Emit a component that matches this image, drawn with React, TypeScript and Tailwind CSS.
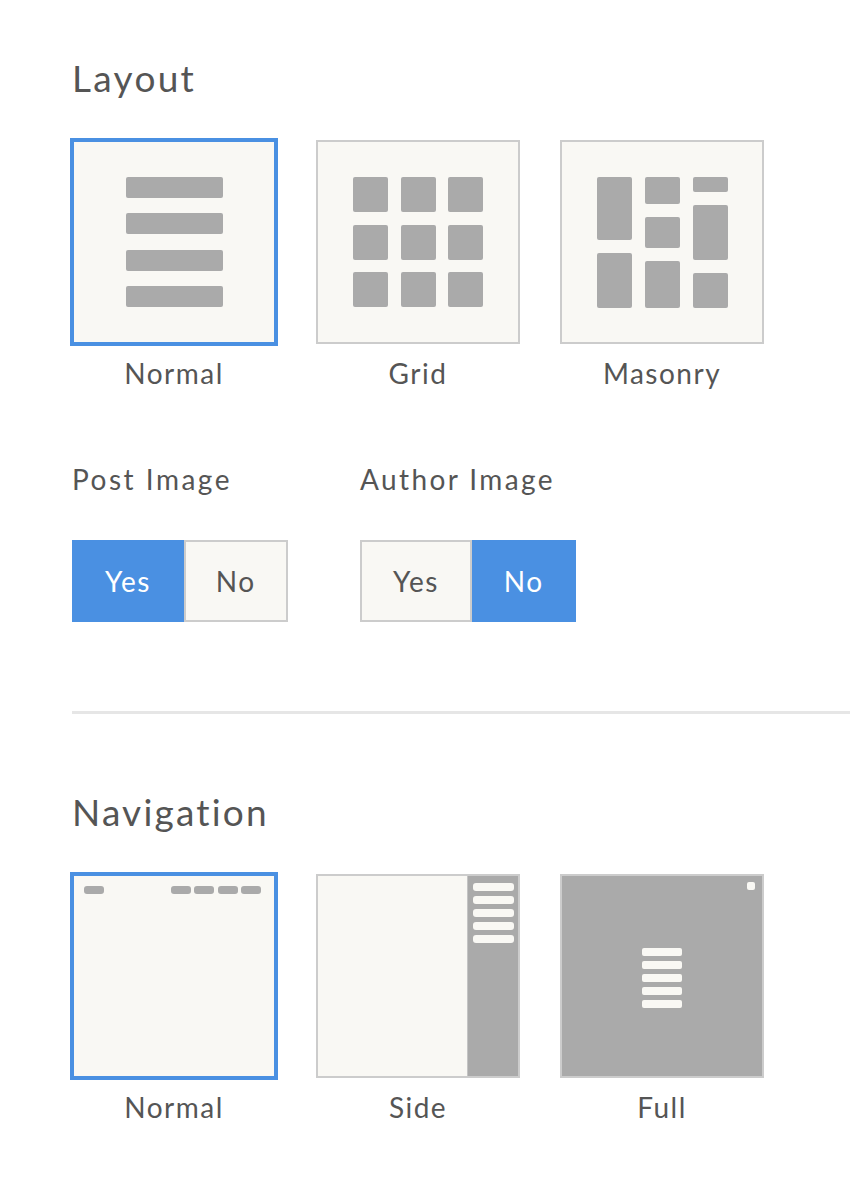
import React from "react";

const font = { fontFamily: "Lato, 'Open Sans', sans-serif" };

function Bar({ className }: { className: string }) {
  return <div className={`rounded-[2px] bg-[#aaaaaa] ${className}`} />;
}

function Card({
  selected,
  label,
  className = "",
  children,
}: {
  selected?: boolean;
  label: string;
  className?: string;
  children: React.ReactNode;
}) {
  return (
    <div className="flex w-[204px] flex-col items-center">
      <div
        className={`h-[204px] w-[204px] border-2 ${
          selected ? "border-[#4a90e2] ring-2 ring-[#4a90e2]" : "border-[#cccccc]"
        } ${className}`}
      >
        {children}
      </div>
      <div className="mt-[12px] text-[28px] leading-[34px] tracking-[1.5px]">{label}</div>
    </div>
  );
}

function Toggle({ value }: { value: "yes" | "no" }) {
  const on = "border-[#4a90e2] bg-[#4a90e2] text-white";
  const off = "border-[#cccccc] bg-[#f9f8f4] text-[#555555]";
  return (
    <div className="flex h-[82px] text-[28px] tracking-[1.5px]">
      <div className={`flex items-center border-2 px-[31px] ${value === "yes" ? on : off}`}>Yes</div>
      <div className={`flex items-center border-2 px-[30px] ${value === "no" ? on : off}`}>No</div>
    </div>
  );
}

export default function App() {
  return (
    <div className="h-[1190px] w-[850px] bg-white pl-[72px] pt-[56px] text-[#555555]" style={font}>
      <h2 className="text-[37px] leading-[44px] tracking-[2.3px]">Layout</h2>

      <div className="mt-[40px] flex gap-[40px]">
        <Card selected label="Normal" className="flex flex-col items-center justify-center gap-[15.5px] bg-[#f9f8f4]">
          <Bar className="h-[21px] w-[97px]" />
          <Bar className="h-[21px] w-[97px]" />
          <Bar className="h-[21px] w-[97px]" />
          <Bar className="h-[21px] w-[97px]" />
        </Card>
        <Card label="Grid" className="flex items-center justify-center bg-[#f9f8f4]">
          <div className="grid grid-cols-3 gap-[12.5px]">
            {Array.from({ length: 9 }).map((_, i) => (
              <Bar key={i} className="h-[35px] w-[35px]" />
            ))}
          </div>
        </Card>
        <Card label="Masonry" className="flex items-center justify-center gap-[13px] bg-[#f9f8f4]">
          <div className="flex w-[35px] flex-col gap-[13px]">
            <Bar className="h-[63px]" />
            <Bar className="h-[55px]" />
          </div>
          <div className="flex w-[35px] flex-col gap-[13px]">
            <Bar className="h-[27px]" />
            <Bar className="h-[31px]" />
            <Bar className="h-[47px]" />
          </div>
          <div className="flex w-[35px] flex-col gap-[13px]">
            <Bar className="h-[15px]" />
            <Bar className="h-[55px]" />
            <Bar className="h-[35px]" />
          </div>
        </Card>
      </div>

      <div className="mt-[72px] flex text-[28px] leading-[34px]">
        <div className="flex w-[288px] flex-col items-start">
          <div className="tracking-[2.5px]">Post Image</div>
          <div className="mt-[44px]">
            <Toggle value="yes" />
          </div>
        </div>
        <div className="flex flex-col items-start">
          <div className="tracking-[2.4px]">Author Image</div>
          <div className="mt-[44px]">
            <Toggle value="no" />
          </div>
        </div>
      </div>

      <div className="mt-[89px] h-[3px] bg-[#e6e6e6]" />

      <h2 className="mt-[76px] text-[37px] leading-[44px] tracking-[2.2px]">Navigation</h2>

      <div className="mt-[40px] flex gap-[40px]">
        <Card selected label="Normal" className="flex items-start justify-between bg-[#f9f8f4] pl-[10px] pr-[13px] pt-[10px]">
          <Bar className="h-[8px] w-[20px] rounded-[3px]" />
          <div className="flex gap-[3.5px]">
            <Bar className="h-[8px] w-[20px] rounded-[3px]" />
            <Bar className="h-[8px] w-[20px] rounded-[3px]" />
            <Bar className="h-[8px] w-[20px] rounded-[3px]" />
            <Bar className="h-[8px] w-[20px] rounded-[3px]" />
          </div>
        </Card>
        <Card label="Side" className="flex bg-[#f9f8f4]">
          <div className="flex-1" />
          <div className="flex w-[51px] flex-col gap-[5px] border-l border-[#c4c4c4] bg-[#aaaaaa] pl-[5px] pr-[4px] pt-[7px]">
            {Array.from({ length: 5 }).map((_, i) => (
              <div key={i} className="h-[8px] rounded-[3px] bg-[#f9f8f4]" />
            ))}
          </div>
        </Card>
        <Card label="Full" className="relative flex items-center justify-center border-[#c8c8c8] bg-[#aaaaaa] pt-[4px]">
          <div className="absolute right-[7px] top-[6px] h-[8px] w-[8px] rounded-[2px] bg-[#f9f8f4]" />
          <div className="flex w-[40px] flex-col gap-[5px]">
            {Array.from({ length: 5 }).map((_, i) => (
              <div key={i} className="h-[8px] rounded-[2px] bg-[#f9f8f4]" />
            ))}
          </div>
        </Card>
      </div>
    </div>
  );
}
